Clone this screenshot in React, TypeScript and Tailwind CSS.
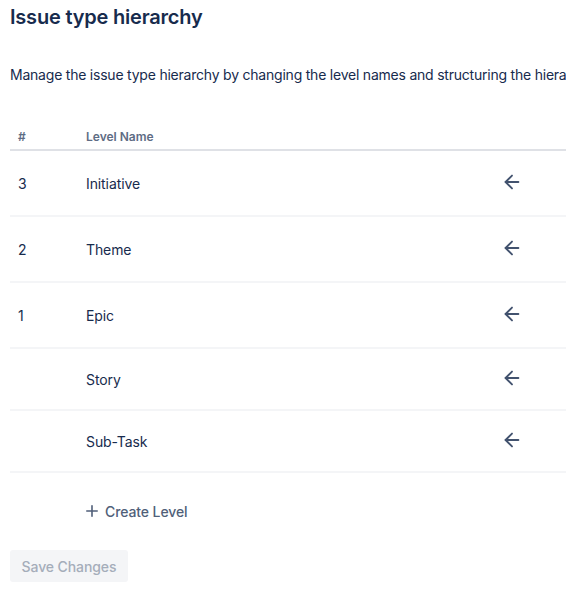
import { ArrowLeft } from 'lucide-react';

const levels = [
  { num: '3', name: 'Initiative', tall: true },
  { num: '2', name: 'Theme', tall: true },
  { num: '1', name: 'Epic', tall: true },
  { num: '', name: 'Story', tall: false },
  { num: '', name: 'Sub-Task', tall: false },
];

export default function App() {
  return (
    <div className="w-[566px] h-[593px] overflow-hidden bg-white font-['Inter','Liberation_Sans',sans-serif] text-[#172b4d]">
      <div className="w-[680px] pl-[10px]">
        <h1 className="mt-[5px] text-[20px] leading-6 font-semibold tracking-[-0.2px]">Issue type hierarchy</h1>

        <p className="mt-[36px] text-[14px] leading-5 whitespace-nowrap tracking-[-0.22px]">
          Manage the issue type hierarchy by changing the level names and structuring the hierarchy levels.
        </p>

        {/* Table */}
        <div className="mt-[44px]">
          <div className="grid grid-cols-[76px_415px_1fr] border-b-2 border-[#dfe1e6] pb-[4px] text-[12px] leading-4 font-semibold text-[#5e6c84]">
            <div className="pl-[8px]">#</div>
            <div>Level Name</div>
            <div />
          </div>

          {levels.map((level) => (
            <div
              key={level.name}
              className={`grid grid-cols-[76px_415px_1fr] items-center border-b-2 border-[#f4f5f7] text-[14px] tracking-[-0.1px] ${level.tall ? 'h-[66px]' : 'h-[62px]'}`}
            >
              <div className="pl-[8px]">{level.num}</div>
              <div>{level.name}</div>
              <div className="flex items-center">
                <ArrowLeft size={22} strokeWidth={2} className="text-[#42526e] -mt-[3px]" />
              </div>
            </div>
          ))}
        </div>

        <button className="mt-[22px] ml-[76px] flex items-center gap-[7px] h-8 text-[14px] font-medium text-[#505f79] tracking-[-0.1px]">
          <svg width="12" height="12" viewBox="0 0 12 12" fill="none" stroke="currentColor" strokeWidth="1.6" strokeLinecap="round">
            <path d="M6 0.8v10.4M0.8 6h10.4" />
          </svg>
          Create Level
        </button>

        <button className="mt-[23px] h-8 w-[118px] rounded-[3px] bg-[#f4f5f7] text-[14px] font-medium text-[#a5adba] tracking-[-0.1px]">
          Save Changes
        </button>
      </div>
    </div>
  );
}
